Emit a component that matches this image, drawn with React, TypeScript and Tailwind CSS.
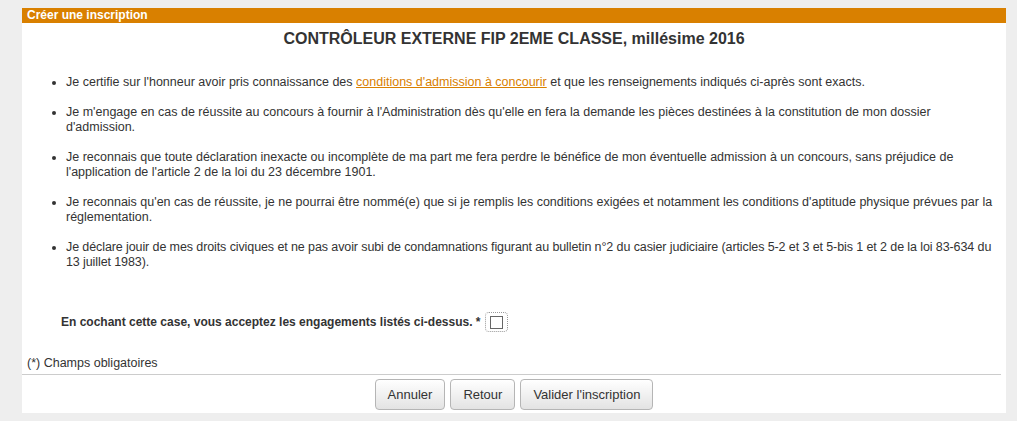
import { useState } from 'react'

const engagements = [
  <>
    Je certifie sur l'honneur avoir pris connaissance des{' '}
    <a href="#" className="text-[#d98000] underline">conditions d'admission à concourir</a> et que les
    renseignements indiqués ci-après sont exacts.
  </>,
  <>
    Je m'engage en cas de réussite au concours à fournir à l'Administration dès qu'elle en fera la demande les
    pièces destinées à la constitution de mon dossier d'admission.
  </>,
  <>
    Je reconnais que toute déclaration inexacte ou incomplète de ma part me fera perdre le bénéfice de mon
    éventuelle admission à un concours, sans préjudice de l'application de l'article 2 de la loi du 23 décembre
    1901.
  </>,
  <>
    Je reconnais qu'en cas de réussite, je ne pourrai être nommé(e) que si je remplis les conditions exigées et
    notamment les conditions d'aptitude physique prévues par la réglementation.
  </>,
  <span className="tracking-[-0.1px]">
    Je déclare jouir de mes droits civiques et ne pas avoir subi de condamnations figurant au bulletin n°2 du
    casier judiciaire (articles 5-2 et 3 et 5-bis 1 et 2 de la loi 83-634 du 13 juillet 1983).
  </span>,
]

function Button({ children }: { children: React.ReactNode }) {
  return (
    <button className="h-[31px] px-[12px] rounded-[4px] border border-[#b5b5b5] bg-gradient-to-b from-white to-[#e3e3e3] text-[13px] text-[#333]">
      {children}
    </button>
  )
}

export default function App() {
  const [accepted, setAccepted] = useState(false)

  return (
    <div
      className="min-h-[421px] bg-[#eeeeee] pt-[8px] pl-[22px] pr-[11px] pb-[8px] text-[12px] leading-[15px] text-[#333]"
      style={{ fontFamily: '"Liberation Sans", Arial, sans-serif' }}
    >
      <div className="bg-white flex flex-col">
        <div className="h-[15px] bg-[#d98000] pl-[5px] text-white font-bold leading-[15px]">Créer une inscription</div>

        <h1 className="mt-[6px] text-center text-[16px] leading-[20px] font-bold">
          CONTRÔLEUR EXTERNE FIP 2EME CLASSE, millésime 2016
        </h1>

        <ul className="mt-[26px] list-disc pl-[44px] pr-[10px] space-y-[15px] text-[12.5px]">
          {engagements.map((e, i) => (
            <li key={i}>{e}</li>
          ))}
        </ul>

        <div className="mt-[42px] pl-[39px] flex items-center h-[20px]">
          <span className="font-bold">En cochant cette case, vous acceptez les engagements listés ci-dessus. *</span>
          <button
            onClick={() => setAccepted(!accepted)}
            className="ml-[4px] w-[23px] h-[20px] rounded-[4px] border border-dotted border-[#999] flex items-center justify-center"
          >
            <span className="w-[13px] h-[13px] border border-[#666] bg-white flex items-center justify-center text-[10px] leading-none">
              {accepted ? '✓' : ''}
            </span>
          </button>
        </div>

        <div className="mt-[24px] pl-[5px] text-[12.5px]">(*) Champs obligatoires</div>

        <div className="mt-[3px] mr-[5px] h-px bg-[#cccccc]" />

        <div className="mt-[4px] pb-[3px] flex justify-center gap-[5px]">
          <Button>Annuler</Button>
          <Button>Retour</Button>
          <Button>Valider l'inscription</Button>
        </div>
      </div>
    </div>
  )
}
